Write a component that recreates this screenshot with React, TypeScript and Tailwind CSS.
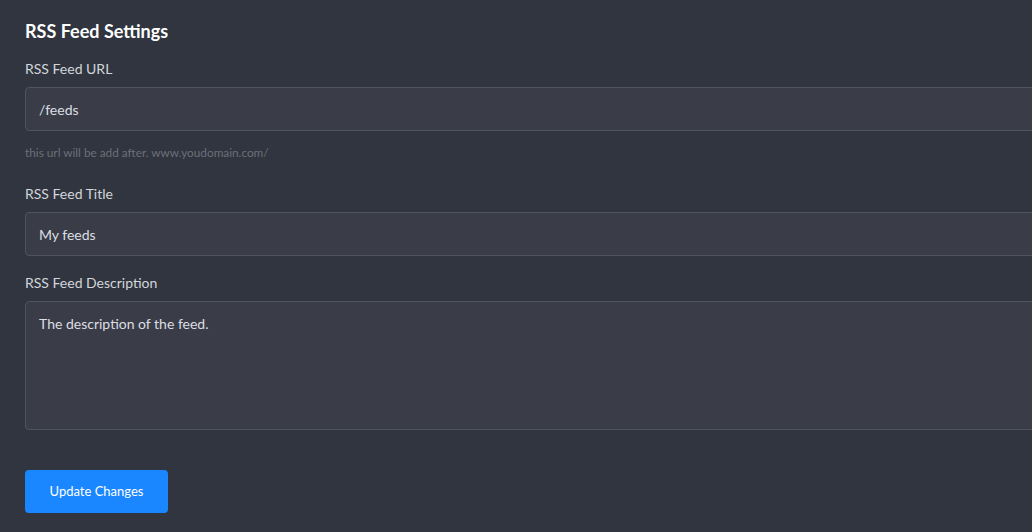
import React from "react"

export default function App() {
  return (
    <div className="min-h-screen w-full overflow-hidden bg-[#30353f] font-[Lato,sans-serif] text-[#d3d6db]">
      <div className="w-[1100px] pl-[25px] pt-[19px]">
        <h2 className="text-[18px] font-bold leading-[24px] text-white">RSS Feed Settings</h2>

        {/* URL */}
        <label className="mt-[16px] block text-[14px] leading-[20px]">RSS Feed URL</label>
        <input
          defaultValue="/feeds"
          className="mt-[8px] block h-[44px] w-full rounded-[4px] border border-[#4f535e] bg-[#3a3d48] px-[13px] text-[14px] text-[#dcdee2] outline-none"
        />
        <p className="mt-[14px] text-[11.8px] leading-[16px] text-[#6c7079]">
          this url will be add after. www.youdomain.com/
        </p>

        {/* Title */}
        <label className="mt-[23px] block text-[14px] leading-[20px]">RSS Feed Title</label>
        <input
          defaultValue="My feeds"
          className="mt-[8px] block h-[44px] w-full rounded-[4px] border border-[#4f535e] bg-[#3a3d48] px-[13px] text-[14px] text-[#dcdee2] outline-none"
        />

        {/* Description */}
        <label className="mt-[17px] block text-[14px] leading-[20px]">RSS Feed Description</label>
        <textarea
          defaultValue="The description of the feed."
          className="mt-[8px] block h-[129px] w-full resize-none rounded-[4px] border border-[#4f535e] bg-[#3a3d48] px-[13px] py-[12px] text-[14px] leading-[20px] text-[#dcdee2] outline-none"
        />

        <button className="mt-[40px] h-[43px] w-[143px] rounded-[4px] bg-[#1a86ff] text-[13px] text-white">
          Update Changes
        </button>
      </div>
    </div>
  )
}
